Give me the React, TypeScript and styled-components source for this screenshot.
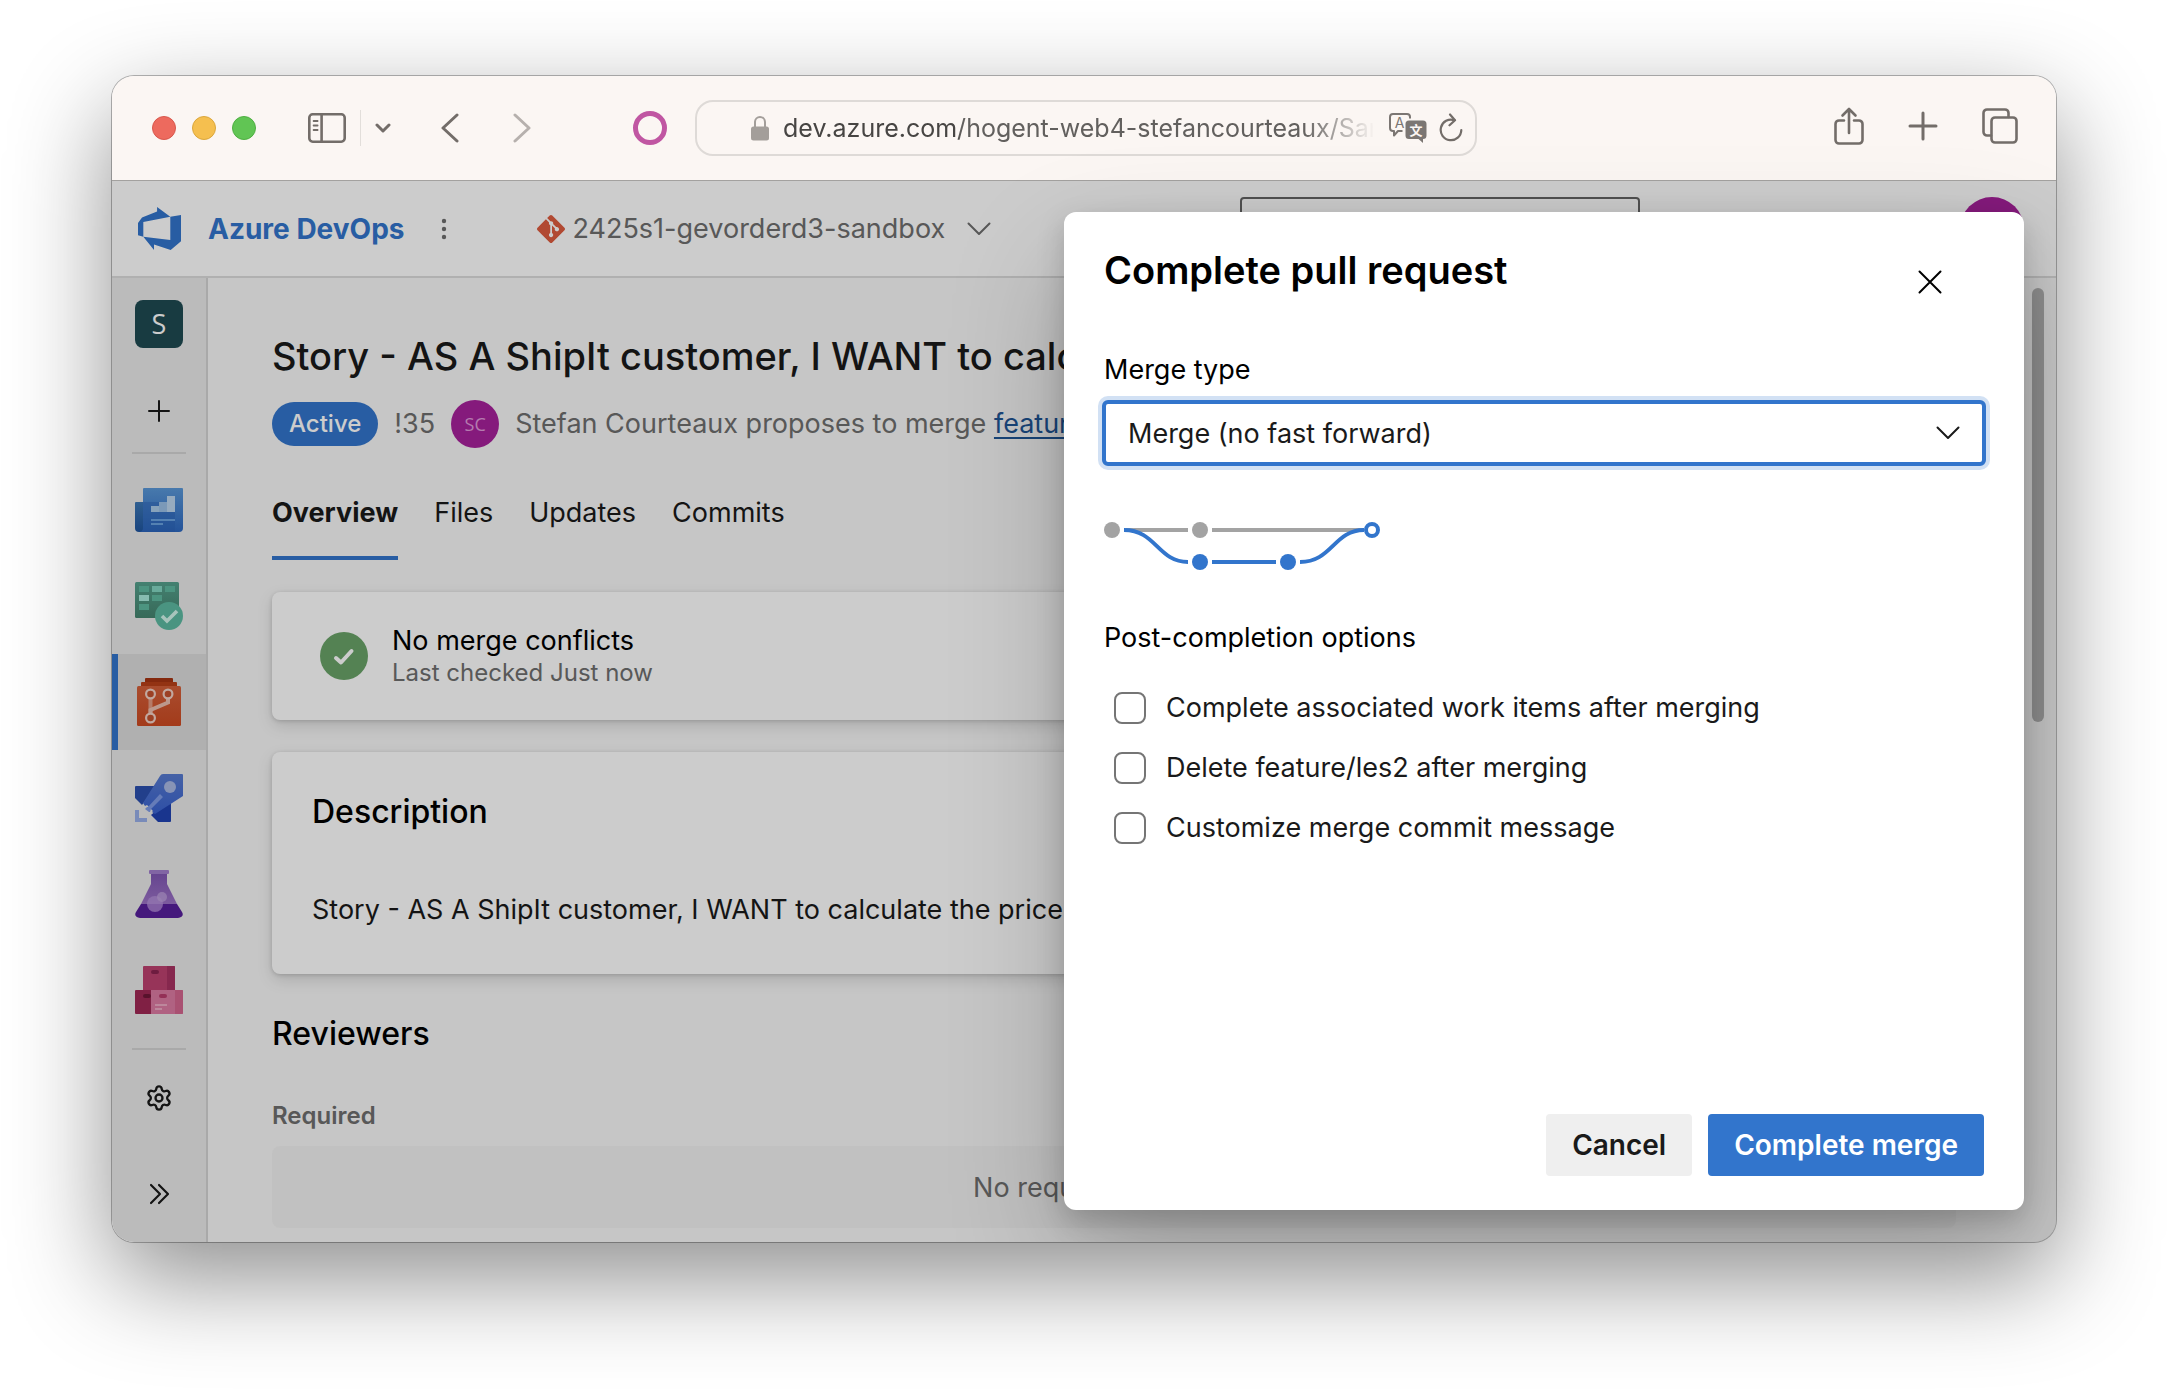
import React from "react";
import styled, { createGlobalStyle } from "styled-components";
import { Settings } from "lucide-react";
import { SiGit } from "react-icons/si";

const color = {
  blue: "#3275cc",
  ink: "#1a1a1a",
  muted: "#6e6e6e",
  chrome: "#fbf6f3",
  chromeInk: "#736d69",
  page: "#f8f8f8",
  nav: "#eaeaea",
  line: "#d4d4d4",
};

const GlobalStyle = createGlobalStyle`
  *, *::before, *::after { box-sizing: border-box; }
  body {
    margin: 0;
    background: #fff;
    color: ${color.ink};
    font-family: Inter, "Liberation Sans", sans-serif;
    font-size: 27px;
    line-height: 40px;
  }
  button, input, select { font: inherit; color: inherit; }
  button { border: 0; padding: 0; background: none; cursor: pointer; }
  h1, h2, h3, p { margin: 0; }
  svg { display: block; flex: none; }
`;

const Desktop = styled.div`
  min-height: 100vh;
  padding: 76px 112px 148px;
`;

const BrowserWindow = styled.div`
  display: flex;
  flex-direction: column;
  overflow: hidden;
  border-radius: 22px;
  background: ${color.page};
  box-shadow: 0 0 0 1px rgba(0, 0, 0, 0.28), 0 36px 100px rgba(0, 0, 0, 0.45);
`;

/* Browser toolbar */

const Toolbar = styled.header`
  display: flex;
  align-items: center;
  height: 105px;
  padding: 0 38px 0 40px;
  background: ${color.chrome};
  border-bottom: 1px solid #a3a19f;
  color: ${color.chromeInk};
`;

const ToolGroup = styled.div<{ $gap: number }>`
  display: flex;
  align-items: center;
  gap: ${(p) => p.$gap}px;
`;

const AddressGroup = styled.div`
  display: flex;
  align-items: center;
  gap: 28px;
  margin: 0 auto 0 102px;
`;

const WindowActions = styled.div`
  display: flex;
  align-items: center;
  gap: 44px;
  padding-bottom: 4px;
`;

const Light = styled.button<{ $fill: string; $edge: string }>`
  width: 24px;
  height: 24px;
  border-radius: 50%;
  background: ${(p) => p.$fill};
  border: 1px solid ${(p) => p.$edge};
`;

const ToolButton = styled.button`
  display: flex;
  align-items: center;
`;

const SidebarToggle = styled(ToolButton)`
  margin-left: 36px;
`;

const HistoryGroup = styled.div`
  display: flex;
  gap: 54px;
  margin-left: 34px;
`;

const FadedButton = styled(ToolButton)`
  opacity: 0.5;
`;

const Ring = styled.button`
  width: 34px;
  height: 34px;
  border: 5px solid #c056a2;
  border-radius: 50%;
`;

const ToolDivider = styled.span`
  width: 1px;
  height: 36px;
  background: #e2deda;
`;

const Address = styled.label`
  display: flex;
  align-items: center;
  width: 782px;
  height: 56px;
  padding: 0 12px 0 54px;
  border: 2px solid #dedad7;
  border-radius: 18px;
`;

const AddressInput = styled.input`
  flex: 1;
  min-width: 0;
  height: 40px;
  margin: 0 16px 0 14px;
  padding: 0;
  border: 0;
  outline: 0;
  background: none;
  color: #474543;
  font-size: 25px;
  mask-image: linear-gradient(
    90deg,
    #000 174px,
    rgba(0, 0, 0, 0.85) 178px,
    rgba(0, 0, 0, 0.85) 520px,
    transparent 592px
  );
`;

/* Site */

const Site = styled.div`
  position: relative;
  display: flex;
  flex-direction: column;
`;

const SiteHeader = styled.header`
  display: flex;
  align-items: center;
  height: 97px;
  padding: 0 32px 0 26px;
  background: #fff;
  border-bottom: 2px solid #dcdcdc;
`;

const Brand = styled.a`
  display: flex;
  align-items: center;
  gap: 27px;
  margin-right: 36px;
  color: ${color.blue};
  font-size: 28px;
  font-weight: 700;
  text-decoration: none;
`;

const ProjectButton = styled.button`
  display: flex;
  align-items: center;
  gap: 8px;
  margin-left: 90px;
  color: ${color.muted};
`;

const ChevronSlot = styled.span`
  margin-left: 14px;
`;

const SearchBox = styled.input`
  width: 400px;
  height: 64px;
  margin: 0 320px 0 auto;
  padding: 0 20px;
  background: #fff;
  border: 2px solid #666;
  border-radius: 4px;
`;

const Avatar = styled.span<{ $size: number }>`
  display: flex;
  align-items: center;
  justify-content: center;
  width: ${(p) => p.$size}px;
  height: ${(p) => p.$size}px;
  border-radius: 50%;
  background: #a7219b;
  color: #e19bdb;
  font-family: "Open Sans", "Noto Sans", sans-serif;
  font-size: 18px;
`;

const SiteBody = styled.div`
  display: flex;
  align-items: stretch;
`;

const Sidebar = styled.nav`
  display: flex;
  flex-direction: column;
  align-items: stretch;
  width: 96px;
  flex: none;
  background: ${color.nav};
  border-right: 2px solid ${color.line};
`;

const NavItem = styled.a<{ $height?: number; $active?: boolean }>`
  display: flex;
  align-items: center;
  justify-content: center;
  height: ${(p) => p.$height ?? 96}px;
  background: ${(p) => (p.$active ? "#dcdcdc" : "none")};
  box-shadow: ${(p) => (p.$active ? `inset 6px 0 ${color.blue}` : "none")};
  color: ${color.ink};
  text-decoration: none;
`;

const NavDivider = styled.span<{ $before: number; $after: number }>`
  height: 2px;
  margin: ${(p) => p.$before}px 20px ${(p) => p.$after}px;
  background: ${color.line};
`;

const ProjectTile = styled.span`
  display: flex;
  align-items: center;
  justify-content: center;
  width: 48px;
  height: 48px;
  border-radius: 8px;
  background: #1f4a52;
  color: #fff;
  font-family: "Open Sans", "Noto Sans", sans-serif;
`;

const Main = styled.main`
  flex: 1;
  min-width: 0;
  padding: 54px 0 14px 64px;
`;

const MainColumn = styled.div`
  display: flex;
  flex-direction: column;
  flex: 1;
  min-width: 0;
`;

const ScrollArea = styled.div`
  display: flex;
  gap: 76px;
  padding-right: 12px;
`;

const ScrollTrack = styled.div`
  width: 12px;
  margin-top: -44px;
  flex: none;
`;

const ScrollThumb = styled.div`
  height: 434px;
  border-radius: 6px;
  background: #b2b2b2;
`;

const PageTitle = styled.h1`
  font-size: 38px;
  line-height: 48px;
  font-weight: 500;
  white-space: nowrap;
  overflow: hidden;
`;

const MetaRow = styled.div`
  display: flex;
  align-items: center;
  gap: 16px;
  margin-top: 20px;
  height: 48px;
  color: ${color.muted};
  white-space: nowrap;
  overflow: hidden;
`;

const StatusPill = styled.span`
  height: 44px;
  padding: 0 17px;
  border-radius: 22px;
  background: ${color.blue};
  color: #fff;
  font-size: 24px;
  line-height: 44px;
  font-weight: 500;
`;

const BranchLink = styled.a`
  color: #1f5597;
  text-decoration: underline;
  text-underline-offset: 4px;
`;

const Tabs = styled.nav`
  display: flex;
  gap: 36px;
  margin-top: 18px;
`;

const Tab = styled.a<{ $active?: boolean }>`
  height: 94px;
  line-height: 94px;
  color: ${color.ink};
  font-weight: ${(p) => (p.$active ? 700 : 400)};
  text-decoration: none;
  box-shadow: ${(p) => (p.$active ? `inset 0 -4px ${color.blue}` : "none")};
`;

const Card = styled.section`
  margin-top: 32px;
  border-radius: 8px;
  background: #fff;
  box-shadow: 0 6px 16px rgba(0, 0, 0, 0.13), 0 1px 4px rgba(0, 0, 0, 0.16);
`;

const StatusCard = styled(Card)`
  display: flex;
  align-items: center;
  gap: 24px;
  height: 128px;
  padding: 0 48px;
`;

const StatusTitle = styled.p`
  line-height: 34px;
  color: #000;
`;

const StatusNote = styled.p`
  font-size: 24px;
  line-height: 30px;
  color: ${color.muted};
`;

const DescriptionCard = styled(Card)`
  padding: 40px 40px 44px;
`;

const SectionTitle = styled.h2`
  font-size: 32px;
  line-height: 40px;
  font-weight: 500;
  color: #000;
`;

const DescriptionText = styled.p`
  margin-top: 58px;
  white-space: nowrap;
  overflow: hidden;
`;

const Reviewers = styled.section`
  margin-top: 40px;
`;

const GroupLabel = styled.h3`
  margin: 46px 0 14px;
  font-size: 24px;
  line-height: 32px;
  font-weight: 600;
  color: ${color.muted};
`;

const EmptyBox = styled.p`
  height: 82px;
  border-radius: 8px;
  background: #f2f2f2;
  color: ${color.muted};
  line-height: 84px;
  text-align: center;
`;

/* Dialog */

const Overlay = styled.div`
  position: absolute;
  inset: 0;
  display: flex;
  justify-content: flex-end;
  padding: 31px 32px 32px;
  background: rgba(0, 0, 0, 0.2);
`;

const Panel = styled.section`
  display: flex;
  flex-direction: column;
  width: 960px;
  max-width: 100%;
  padding: 34px 40px;
  border-radius: 12px;
  background: #fff;
  box-shadow: 0 50px 116px rgba(0, 0, 0, 0.22), 0 10px 28px rgba(0, 0, 0, 0.18);
`;

const PanelHeader = styled.div`
  display: flex;
  align-items: flex-start;
  justify-content: space-between;
  padding-right: 30px;
  color: #000;
`;

const PanelTitle = styled.h2`
  font-size: 38px;
  line-height: 48px;
  font-weight: 600;
`;

const CloseButton = styled.button`
  display: flex;
  align-items: center;
  justify-content: center;
  width: 48px;
  height: 48px;
  margin-top: 12px;
`;

const FieldLabel = styled.label`
  margin-top: 44px;
  color: #000;
`;

const SelectFrame = styled.div`
  display: grid;
  align-items: center;
  margin: 10px -2px 0;
  > * { grid-area: 1 / 1; }
  > svg { justify-self: end; margin-right: 26px; pointer-events: none; }
`;

const Select = styled.select`
  appearance: none;
  width: 100%;
  height: 66px;
  padding: 2px 60px 0 22px;
  border: 4px solid ${color.blue};
  border-radius: 6px;
  outline: 0;
  background: #fff;
  color: ${color.ink};
  box-shadow: 0 0 0 4px #d2e1f4;
`;

const Graph = styled.svg`
  margin-top: 56px;
`;

const Options = styled.fieldset`
  margin: 48px 0 0;
  padding: 0;
  border: 0;
`;

const Legend = styled.legend`
  padding: 0;
  margin-bottom: 20px;
  color: #000;
`;

const Option = styled.label`
  display: flex;
  align-items: center;
  gap: 20px;
  height: 60px;
  padding-left: 10px;
`;

const Checkbox = styled.input`
  appearance: none;
  width: 32px;
  height: 32px;
  margin: 0;
  border: 2px solid #757575;
  border-radius: 8px;
  background: #fff;
  &:checked { background: ${color.blue}; }
`;

const Actions = styled.div`
  display: flex;
  justify-content: flex-end;
  gap: 16px;
  margin-top: auto;
`;

const ActionButton = styled.button<{ $primary?: boolean }>`
  height: 62px;
  padding: 0 26px;
  border-radius: 4px;
  background: ${(p) => (p.$primary ? color.blue : "#efefef")};
  color: ${(p) => (p.$primary ? "#fff" : color.ink)};
  font-size: 28px;
  font-weight: 600;
`;

/* Icons */

const stroke = (width: number) => ({
  fill: "none",
  stroke: "currentColor",
  strokeWidth: width,
  strokeLinecap: "round" as const,
  strokeLinejoin: "round" as const,
});

const SidebarIcon = () => (
  <svg width="38" height="30" viewBox="0 0 38 30" {...stroke(2.6)}>
    <rect x="1.3" y="1.3" width="35.4" height="27.4" rx="3.4" />
    <path d="M13.6 1.5v27" />
    <path d="M5.6 8h4M5.6 12.5h4M5.6 17h4" strokeWidth="1.8" />
  </svg>
);

const SmallChevron = () => (
  <svg width="16" height="10" viewBox="0 0 16 10" {...stroke(3)}>
    <path d="M2 2l6 6 6-6" />
  </svg>
);

const Arrow = ({ flip }: { flip?: boolean }) => (
  <svg width="18" height="30" viewBox="0 0 18 30" {...stroke(3)}>
    <path d={flip ? "M2 2l14 13L2 28" : "M16 2L2 15l14 13"} />
  </svg>
);

const LockIcon = () => (
  <svg width="18" height="26" viewBox="0 0 18 26">
    <path d="M4 12V7a5 5 0 0 1 10 0v5" fill="none" stroke="#a39e9a" strokeWidth="2" />
    <rect y="11.5" width="18" height="14" rx="2.5" fill="#a39e9a" />
  </svg>
);

const TranslateIcon = () => (
  <svg width="38" height="30" viewBox="0 0 38 30">
    <path
      d="M13.5 18H9l-4 4.5V18H4a3 3 0 0 1-3-3V4a3 3 0 0 1 3-3h14a3 3 0 0 1 3 3v1.5"
      fill="none" stroke="#7b7673" strokeWidth="2" strokeLinejoin="round"
    />
    <text x="10.5" y="14.5" fontSize="14" textAnchor="middle" fill="#7b7673">A</text>
    <path d="M20 7.500h14a3.500 3.500 0 0 1 3.500 3.500v11.500A3.500 3.500 0 0 1 34 26v4l-4.500-4H20a3.500 3.500 0 0 1-3.500-3.500V11A3.500 3.500 0 0 1 20 7.500z" fill="#7b7673" />
    <text x="27" y="21.5" fontSize="13" fontWeight="700" textAnchor="middle" fill="#fbf6f3" fontFamily="Noto Sans CJK SC, sans-serif">文</text>
  </svg>
);

const ReloadIcon = () => (
  <svg width="24" height="30" viewBox="0 0 24 30" {...stroke(2.2)}>
    <path d="M15.500 7.200A10.300 10.300 0 1 0 22.300 17" />
    <path d="M11 1.500l5 5.800-5.500 5" />
  </svg>
);

const ShareIcon = () => (
  <svg width="30" height="38" viewBox="0 0 30 38" {...stroke(2.6)}>
    <path d="M10 13.500H5A3.500 3.500 0 0 0 1.500 17v16A3.500 3.500 0 0 0 5 36.500h20a3.500 3.500 0 0 0 3.500-3.500V17a3.500 3.500 0 0 0-3.500-3.500h-5" />
    <path d="M15 26V2M8.500 8.500L15 2l6.500 6.500" />
  </svg>
);

const PlusIcon = ({ size, width }: { size: number; width: number }) => (
  <svg width={size} height={size} viewBox={`0 0 ${size} ${size}`} {...stroke(width)}>
    <path d={`M${size / 2} 2v${size - 4}M2 ${size / 2}h${size - 4}`} />
  </svg>
);

const TabsIcon = () => (
  <svg width="36" height="36" viewBox="0 0 36 36" {...stroke(2.6)}>
    <path d="M9 27.500H5A3.500 3.500 0 0 1 1.500 24V5A3.500 3.500 0 0 1 5 1.500h18A3.500 3.500 0 0 1 26.500 5v4" />
    <rect x="9.5" y="9.5" width="25" height="25" rx="3.5" />
  </svg>
);

const ChevronDown = () => (
  <svg width="24" height="14" viewBox="0 0 24 14" {...stroke(2)}>
    <path d="M1.500 1.500L12 12 22.500 1.500" />
  </svg>
);

const DevOpsLogo = () => (
  <svg width="43" height="43" viewBox="0 0 24 24" fill={color.blue}>
    <path d="M0 8.877L2.247 5.910l8.405-3.416V.022l7.370 5.393L2.966 8.338v8.225L0 15.707zm24-4.450v14.651l-5.753 4.900-9.303-3.057v3.056l-5.978-7.416 15.057 1.798V5.415z" />
  </svg>
);

const MoreIcon = () => (
  <svg width="6" height="22" viewBox="0 0 6 22" fill="#6e6e6e">
    <circle cx="3" cy="3" r="2.2" />
    <circle cx="3" cy="11" r="2.2" />
    <circle cx="3" cy="19" r="2.2" />
  </svg>
);

const OverviewIcon = () => (
  <svg width="48" height="44" viewBox="0 0 48 44">
    <defs>
      <linearGradient id="ov" x2="0" y2="1">
        <stop stopColor="#5a98d8" /><stop offset="1" stopColor="#2d68c0" />
      </linearGradient>
      <linearGradient id="ovl" x2="0" y2="1">
        <stop stopColor="#3c77b5" /><stop offset="1" stopColor="#1f559f" />
      </linearGradient>
    </defs>
    <path d="M1 14h10v30H4a4 4 0 0 1-4-4V15a1 1 0 0 1 1-1z" fill="url(#ovl)" />
    <path d="M9 0h38a1 1 0 0 1 1 1v39a4 4 0 0 1-4 4H4a4 4 0 0 0 4-4V1a1 1 0 0 1 1-1z" fill="url(#ov)" />
    <path d="M8 14h32v30H4a4 4 0 0 0 4-4z" fill="#2a62b6" opacity=".45" />
    <path d="M16 18h8v6h-8z" fill="#a9cbea" />
    <path d="M24 14h8v10h-8z" fill="#9ac0e6" />
    <path d="M32 8h8v16h-8z" fill="#bcd6ef" />
    <path d="M16 31h24v2H16zM16 35h12v2H16z" fill="#69a2df" />
  </svg>
);

const BoardsIcon = () => (
  <svg width="48" height="48" viewBox="0 0 48 48">
    <defs>
      <linearGradient id="bd" x2="0" y2="1">
        <stop stopColor="#55a18d" /><stop offset="1" stopColor="#45846f" />
      </linearGradient>
    </defs>
    <rect width="44" height="36" rx="1.5" fill="url(#bd)" />
    <path d="M4 4h10v6H4zM30 4h10v6H30zM17 13h10v6H17zM4 22h10v6H4z" fill="#5fb9a1" />
    <path d="M17 4h10v6H17z" fill="#83d6c2" />
    <path d="M4 13h10v6H4z" fill="#a9ecdc" />
    <circle cx="34" cy="34" r="14" fill="#5dbaa2" />
    <path d="M27 34l5 5 10-10" fill="none" stroke="#d3f5ec" strokeWidth="3.6" />
  </svg>
);

const ReposIcon = () => (
  <svg width="44" height="48" viewBox="0 0 44 48">
    <defs>
      <linearGradient id="rp" x2="0" y2="1">
        <stop stopColor="#d4603a" /><stop offset="1" stopColor="#cc4a22" />
      </linearGradient>
    </defs>
    <path d="M9 0h26a1 1 0 0 1 1 1v4H8V1a1 1 0 0 1 1-1z" fill="#a53412" />
    <path d="M5 4h34a1 1 0 0 1 1 1v5H4V5a1 1 0 0 1 1-1z" fill="#b84018" />
    <rect y="8" width="44" height="40" rx="1.5" fill="url(#rp)" />
    <g fill="none" strokeWidth="4">
      <path d="M13.500 20v16" stroke="#e39a82" />
      <path d="M31 19v5.500L13.500 32v4" stroke="#ecbfb0" />
    </g>
    <g fill="#c4512d" stroke="#f2d3c8" strokeWidth="2.2">
      <circle cx="13.5" cy="16" r="4.4" />
      <circle cx="31" cy="16" r="4.4" />
      <circle cx="13.5" cy="40" r="4.4" />
    </g>
  </svg>
);

const PipelinesIcon = () => (
  <svg width="48" height="48" viewBox="0 0 48 48">
    <defs>
      <linearGradient id="pl" x2="0" y2="1">
        <stop stopColor="#577bd0" /><stop offset="1" stopColor="#3a63d0" />
      </linearGradient>
    </defs>
    <path d="M1 12h20L7 31l-7-7V13a1 1 0 0 1 1-1z" fill="#2b4fae" />
    <path d="M36 24v23a1 1 0 0 1-1 1H23l-7-7z" fill="#2043b2" />
    <path d="M28 0h19a1 1 0 0 1 1 1v21L20 40l-3-2 1-1-6-6-2 1-2-3L25 2a4 4 0 0 1 3-2z" fill="url(#pl)" />
    <circle cx="35" cy="13" r="6" fill="#a9b9e4" />
    <path d="M10 35l2-2 1 0L25 20l3 3-12 12-1 3-1 0z" fill="#7f9ce6" />
    <path d="M0 36h4v8h8v4H0z" fill="#98aee8" />
  </svg>
);

const TestIcon = () => (
  <svg width="48" height="48" viewBox="0 0 48 48">
    <defs>
      <linearGradient id="ts" x2="0" y2="1">
        <stop stopColor="#8057b4" /><stop offset="1" stopColor="#9c72c6" />
      </linearGradient>
    </defs>
    <path d="M16 4h16v10l10 20H6l10-20z" fill="url(#ts)" />
    <rect x="14" width="20" height="4" rx="1" fill="#a27fce" />
    <path d="M6 34h36l5 8c2 3 0 6-4 6H5c-4 0-6-3-4-6z" fill="#571f9c" />
    <circle cx="20" cy="34" r="8" fill="#b894dc" opacity=".75" />
    <circle cx="27" cy="27" r="5" fill="#c3a6e0" opacity=".7" />
  </svg>
);

const ArtifactsIcon = () => (
  <svg width="48" height="48" viewBox="0 0 48 48">
    <rect x="8" width="32" height="26" rx="1" fill="#bd4170" />
    <path d="M32 0h7a1 1 0 0 1 1 1v23h-8z" fill="#a83362" />
    <rect x="16" y="4" width="8" height="4" rx="2" fill="#8a2450" />
    <rect y="24" width="18" height="24" rx="1" fill="#a12855" />
    <rect x="8" y="28" width="8" height="4" rx="2" fill="#6f1738" />
    <path d="M16 24h31a1 1 0 0 1 1 1v22a1 1 0 0 1-1 1H16z" fill="#dd7ba3" />
    <path d="M40 24h7a1 1 0 0 1 1 1v22a1 1 0 0 1-1 1h-7z" fill="#d4668f" />
    <rect x="24" y="28" width="8" height="4" rx="2" fill="#b93d6d" />
    <path d="M20 38h12v2H20zM20 42h7v2h-7z" fill="#eda9c3" />
  </svg>
);

const CheckIcon = () => (
  <svg width="48" height="48" viewBox="0 0 48 48">
    <circle cx="24" cy="24" r="24" fill="#69a368" />
    <path d="M16 26l5 4.500L31.500 19" fill="none" stroke="#fff" strokeWidth="4" strokeLinecap="round" strokeLinejoin="round" />
  </svg>
);

const ExpandIcon = () => (
  <svg width="22" height="22" viewBox="0 0 22 22" {...stroke(2.2)}>
    <path d="M3 2l9 9-9 9M11 2l9 9-9 9" />
  </svg>
);

const CloseIcon = () => (
  <svg width="24" height="24" viewBox="0 0 24 24" {...stroke(2)}>
    <path d="M1.500 1.500l21 21M22.500 1.500l-21 21" />
  </svg>
);

const MergeGraph = () => (
  <Graph width="280" height="48" viewBox="0 0 280 48" fill="none" strokeWidth="4" aria-label="Merge preview" role="img">
    <path d="M22 8h62M108 8h152" stroke="#a3a3a3" />
    <path d="M20 8c32 0 34 32 64 32M108 40h64M196 40c32 0 34-32 64-32" stroke={color.blue} />
    <circle cx="8" cy="8" r="8" fill="#a3a3a3" />
    <circle cx="96" cy="8" r="8" fill="#a3a3a3" />
    <circle cx="96" cy="40" r="8" fill={color.blue} />
    <circle cx="184" cy="40" r="8" fill={color.blue} />
    <circle cx="268" cy="8" r="6" fill="#fff" stroke={color.blue} />
  </Graph>
);

const services = [
  { name: "Overview", icon: <OverviewIcon /> },
  { name: "Boards", icon: <BoardsIcon /> },
  { name: "Repos", icon: <ReposIcon />, active: true },
  { name: "Pipelines", icon: <PipelinesIcon /> },
  { name: "Test Plans", icon: <TestIcon /> },
  { name: "Artifacts", icon: <ArtifactsIcon /> },
];

const options = [
  "Complete associated work items after merging",
  "Delete feature/les2 after merging",
  "Customize merge commit message",
];

const story = "Story - AS A ShipIt customer, I WANT to calculate the price";

const BrowserToolbar = () => (
  <Toolbar>
    <ToolGroup $gap={16}>
      <Light $fill="#ed6a5e" $edge="#d8584d" aria-label="Close window" />
      <Light $fill="#f5bf4f" $edge="#dba73c" aria-label="Minimize window" />
      <Light $fill="#61c554" $edge="#4faf42" aria-label="Zoom window" />
      <ToolGroup $gap={14}>
        <SidebarToggle aria-label="Show sidebar"><SidebarIcon /></SidebarToggle>
        <ToolDivider />
        <ToolButton aria-label="Tab groups"><SmallChevron /></ToolButton>
      </ToolGroup>
      <HistoryGroup>
        <ToolButton aria-label="Back"><Arrow /></ToolButton>
        <FadedButton aria-label="Forward" disabled><Arrow flip /></FadedButton>
      </HistoryGroup>
    </ToolGroup>
    <AddressGroup>
      <Ring aria-label="Extension" />
      <Address>
        <LockIcon />
        <AddressInput aria-label="Address" readOnly value="dev.azure.com/hogent-web4-stefancourteaux/Sandbox" />
        <ToolGroup $gap={12}>
          <TranslateIcon />
          <ReloadIcon />
        </ToolGroup>
      </Address>
    </AddressGroup>
    <WindowActions>
      <ToolButton aria-label="Share"><ShareIcon /></ToolButton>
      <ToolButton aria-label="New tab"><PlusIcon size={30} width={3} /></ToolButton>
      <ToolButton aria-label="Show all tabs"><TabsIcon /></ToolButton>
    </WindowActions>
  </Toolbar>
);

const PullRequestPage = () => (
  <SiteBody>
    <Sidebar aria-label="Project">
      <NavItem href="#" $height={92} aria-label="Project home"><ProjectTile>S</ProjectTile></NavItem>
      <NavItem href="#" $height={82} aria-label="Add"><PlusIcon size={24} width={2} /></NavItem>
      <NavDivider $before={0} $after={8} />
      {services.map((s) => (
        <NavItem key={s.name} href="#" $active={s.active} aria-label={s.name}>{s.icon}</NavItem>
      ))}
      <NavDivider $before={10} $after={0} />
      <NavItem href="#" aria-label="Project settings"><Settings size={28} strokeWidth={2} /></NavItem>
      <NavItem href="#" aria-label="Expand"><ExpandIcon /></NavItem>
    </Sidebar>
    <Main>
      <ScrollArea>
        <MainColumn>
          <PageTitle>{story}</PageTitle>
          <MetaRow>
            <StatusPill>Active</StatusPill>
            <span>!35</span>
            <Avatar $size={48}>SC</Avatar>
            <span>
              Stefan Courteaux proposes to merge <BranchLink href="#">feature/les2</BranchLink>
            </span>
          </MetaRow>
          <Tabs>
            <Tab href="#" $active>Overview</Tab>
            <Tab href="#">Files</Tab>
            <Tab href="#">Updates</Tab>
            <Tab href="#">Commits</Tab>
          </Tabs>
          <StatusCard>
            <CheckIcon />
            <div>
              <StatusTitle>No merge conflicts</StatusTitle>
              <StatusNote>Last checked Just now</StatusNote>
            </div>
          </StatusCard>
          <DescriptionCard>
            <SectionTitle>Description</SectionTitle>
            <DescriptionText>{story}</DescriptionText>
          </DescriptionCard>
          <Reviewers>
            <SectionTitle>Reviewers</SectionTitle>
            <GroupLabel>Required</GroupLabel>
            <EmptyBox>No required reviewers</EmptyBox>
          </Reviewers>
        </MainColumn>
        <ScrollTrack><ScrollThumb /></ScrollTrack>
      </ScrollArea>
    </Main>
  </SiteBody>
);

const CompleteDialog = () => (
  <Overlay>
    <Panel role="dialog" aria-modal="true" aria-labelledby="dialog-title">
      <PanelHeader>
        <PanelTitle id="dialog-title">Complete pull request</PanelTitle>
        <CloseButton aria-label="Close"><CloseIcon /></CloseButton>
      </PanelHeader>
      <FieldLabel htmlFor="merge-type">Merge type</FieldLabel>
      <SelectFrame>
        <Select id="merge-type" defaultValue="merge">
          <option value="merge">Merge (no fast forward)</option>
        </Select>
        <ChevronDown />
      </SelectFrame>
      <MergeGraph />
      <Options>
        <Legend>Post-completion options</Legend>
        {options.map((label) => (
          <Option key={label}>
            <Checkbox type="checkbox" />
            {label}
          </Option>
        ))}
      </Options>
      <Actions>
        <ActionButton type="button">Cancel</ActionButton>
        <ActionButton type="button" $primary>Complete merge</ActionButton>
      </Actions>
    </Panel>
  </Overlay>
);

export default function App() {
  return (
    <>
      <GlobalStyle />
      <Desktop>
        <BrowserWindow>
          <BrowserToolbar />
          <Site>
            <SiteHeader>
              <Brand href="#"><DevOpsLogo />Azure DevOps</Brand>
              <ToolButton aria-label="More"><MoreIcon /></ToolButton>
              <ProjectButton>
                <SiGit size={28} color="#de5c3f" />
                2425s1-gevorderd3-sandbox
                <ChevronSlot><ChevronDown /></ChevronSlot>
              </ProjectButton>
              <SearchBox type="search" aria-label="Search" />
              <Avatar $size={64} />
            </SiteHeader>
            <PullRequestPage />
            <CompleteDialog />
          </Site>
        </BrowserWindow>
      </Desktop>
    </>
  );
}
